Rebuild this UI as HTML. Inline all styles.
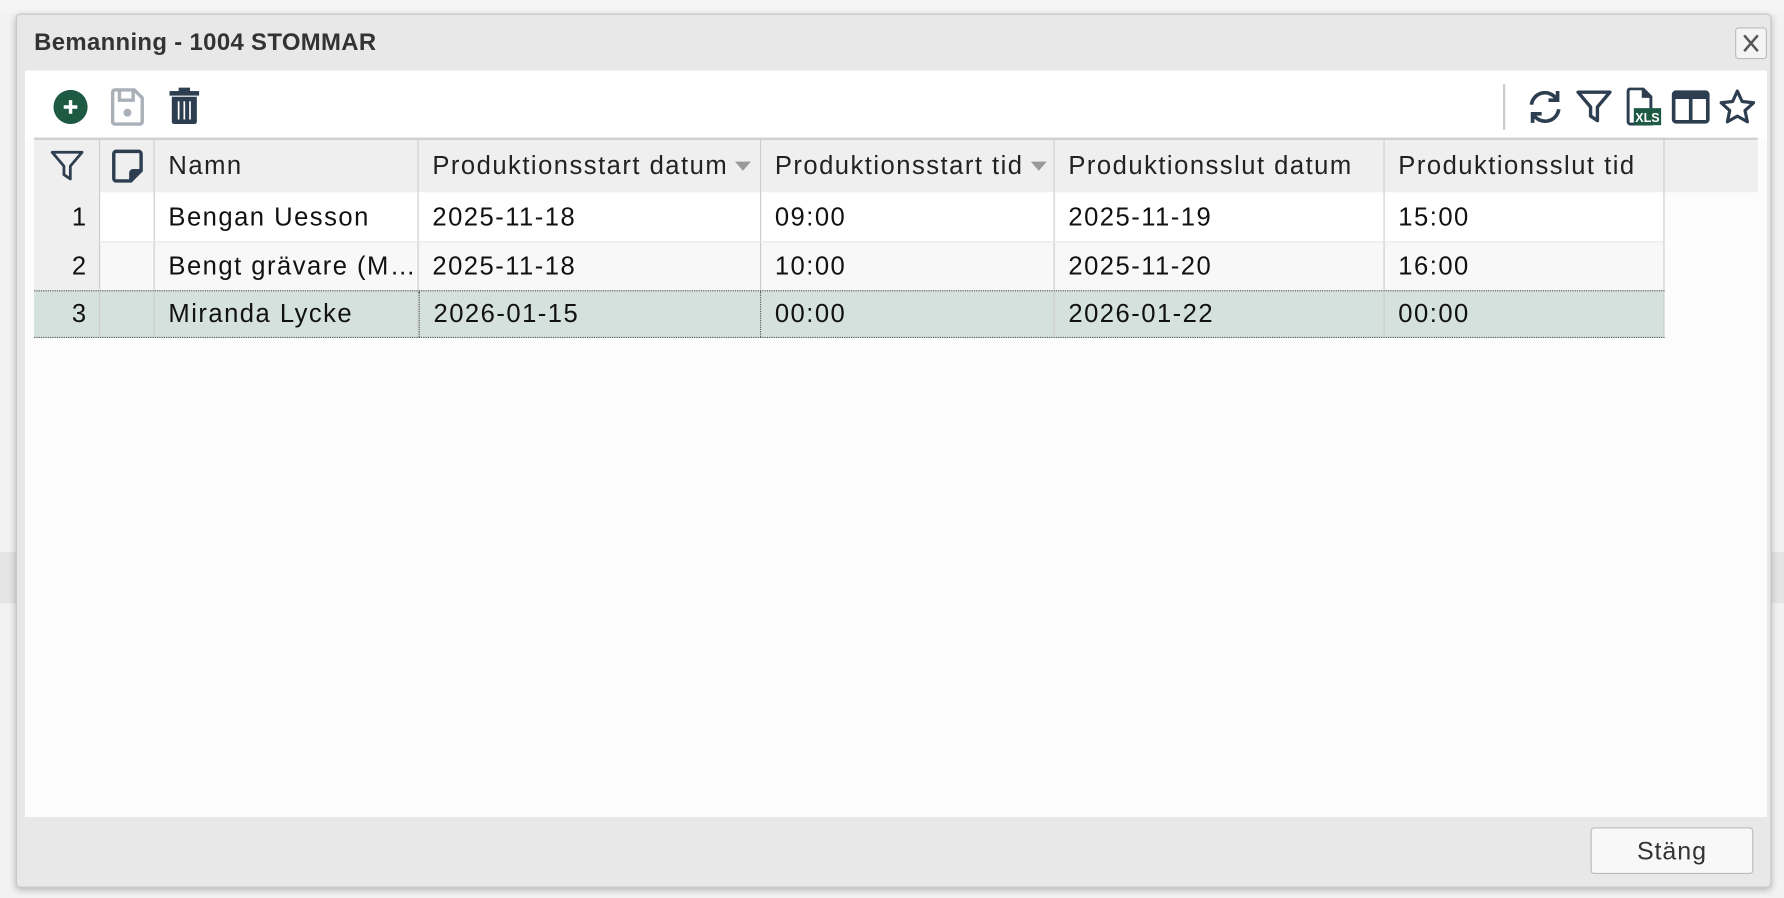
<!DOCTYPE html>
<html><head><meta charset="utf-8"><style>
*{box-sizing:border-box;margin:0;padding:0}
html,body{width:1784px;height:898px;overflow:hidden;background:#f2f2f2;font-family:"Liberation Sans",sans-serif}
#w{position:absolute;left:0;top:0;width:1568px;height:789px;transform:scale(1.13776,1.1381);transform-origin:0 0}
.bgl{position:absolute;background:#ddd}
#dlg{position:absolute;left:14px;top:12px;width:1543px;height:768px;background:#e8e8e8;border:1px solid #c8c8c8;border-radius:4px;box-shadow:0 2px 6px rgba(0,0,0,.25)}
#title{position:absolute;left:15px;top:13px;font-size:21px;color:#333;font-weight:bold;letter-spacing:.3px}
#close{position:absolute;left:1510px;top:11px;width:28px;height:28px;border:1px solid #bbb;border-radius:3px;background:#f4f4f4}
#content{position:absolute;left:7px;top:49px;width:1531px;height:656px;background:#fcfcfc}
#tb{position:absolute;left:0;top:0;width:1531px;height:60px;background:#fff}
.ic{position:absolute}
#grid{position:absolute;left:8px;top:59px}
.row{position:absolute;left:0;height:44px;width:1433px}
.c{position:absolute;top:0;height:100%;border-right:1px solid #ccc;font-size:22.5px;letter-spacing:1.3px;color:#111;padding-left:12px;display:flex;align-items:center;white-space:nowrap;overflow:hidden}
.hd .c{background:#efefef;color:#222}
#btn{position:absolute;left:1383px;top:714px;width:143px;height:41px;border:1px solid #bbb;border-radius:3px;background:#f8f8f8;font-size:22px;letter-spacing:.8px;color:#333;display:flex;align-items:center;justify-content:center}
.tri{display:inline-block;margin-left:6px;width:0;height:0;border-left:7px solid transparent;border-right:7px solid transparent;border-top:8px solid #999}
</style></head><body><div id="w">
<div class="bgl" style="left:0;top:0;width:1568px;height:12px;background:#f5f5f5"></div>
<div class="bgl" style="left:0;top:485px;width:14px;height:45px;background:#e4e4e4"></div>
<div class="bgl" style="left:1557px;top:485px;width:11px;height:45px;background:#e4e4e4"></div>
<div id="dlg">
 <div id="title">Bemanning - 1004 STOMMAR</div>
 <div id="close"><svg width="26" height="26" viewBox="0 0 26 26"><path d="M7 6L19 20M19 6L7 20" stroke="#555" stroke-width="2.2"/></svg></div>
 <div id="content">
  <div id="tb">
   <svg class="ic" style="left:24px;top:16px" width="32" height="32" viewBox="0 0 32 32"><circle cx="16" cy="16" r="15" fill="#1e5a43"/><path d="M16 10v12M10 16h12" stroke="#fff" stroke-width="3"/></svg>
   <svg class="ic" style="left:74px;top:15px" width="32" height="34" viewBox="0 0 32 34"><path d="M3 4a2 2 0 0 1 2-2h17l7 7v21a2 2 0 0 1-2 2H5a2 2 0 0 1-2-2z" fill="none" stroke="#aab0b8" stroke-width="3"/><path d="M9 3v8h12V3" fill="none" stroke="#aab0b8" stroke-width="3"/><circle cx="16" cy="22" r="3.5" fill="#aab0b8"/></svg>
   <svg class="ic" style="left:126px;top:14px" width="28" height="34" viewBox="0 0 28 34"><rect x="1" y="4" width="26" height="4" fill="#2d3e50"/><rect x="9" y="1" width="10" height="4" fill="#2d3e50"/><path d="M3 9h22v22a2 2 0 0 1-2 2H5a2 2 0 0 1-2-2z" fill="#2d3e50"/><path d="M9 13v16M14 13v16M19 13v16" stroke="#fff" stroke-width="1.5"/></svg>
   <div class="ic" style="left:1299px;top:12px;width:2px;height:40px;background:#ccc"></div>
   <svg class="ic" style="left:1319px;top:15px" width="34" height="34" viewBox="0 0 34 34" fill="none" stroke="#2d3e50" stroke-width="3.2"><path d="M5 15A12 12 0 0 1 27 10"/><path d="M28 3v8h-8"/><path d="M29 19A12 12 0 0 1 7 24"/><path d="M6 31v-8h8"/></svg>
   <svg class="ic" style="left:1362px;top:16px" width="34" height="32" viewBox="0 0 34 32" fill="none" stroke="#2d3e50" stroke-width="3" stroke-linejoin="round"><path d="M3 3h28L20 16v12l-6-4v-8z"/></svg>
   <svg class="ic" style="left:1407px;top:15px" width="32" height="34" viewBox="0 0 32 34"><path d="M2 3a2 2 0 0 1 2-2h11l7 7v24H4a2 2 0 0 1-2-2z" fill="none" stroke="#2d3e50" stroke-width="2.6"/><path d="M14 1v8h8" fill="#2d3e50"/><rect x="7" y="18" width="24" height="15" fill="#1e5a43"/><text x="19" y="30" font-size="11" font-weight="bold" fill="#fff" text-anchor="middle" font-family="Liberation Sans">XLS</text></svg>
   <svg class="ic" style="left:1447px;top:17px" width="34" height="30" viewBox="0 0 34 30"><rect x="2" y="2" width="30" height="26" rx="2" fill="none" stroke="#2d3e50" stroke-width="3.2"/><rect x="2" y="2" width="30" height="6" fill="#2d3e50"/><path d="M17 6v22" stroke="#2d3e50" stroke-width="3.2"/></svg>
   <svg class="ic" style="left:1488px;top:15px" width="34" height="34" viewBox="0 0 34 34"><path d="M17 3l4.2 9.2 10 1.1-7.5 6.8 2.1 9.9L17 25l-8.8 5 2.1-9.9-7.5-6.8 10-1.1z" fill="none" stroke="#2d3e50" stroke-width="2.8" stroke-linejoin="round"/></svg>
  </div>
  <div id="grid">
   <div style="position:absolute;left:0;top:0;width:1515px;height:48px;background:#efefef;border-top:2px solid #d0d0d0"></div>
   <div class="row hd" style="top:0;height:48px;border-top:2px solid #d0d0d0">
    <div class="c" style="left:0;width:58px;padding:0;justify-content:center"><svg width="32" height="30" viewBox="0 0 34 32" fill="none" stroke="#2d3e50" stroke-width="2.6" stroke-linejoin="round"><path d="M3 3h28L20 16v12l-6-4v-8z"/></svg></div>
    <div class="c" style="left:58px;width:48px;padding:0;justify-content:center"><svg width="32" height="32" viewBox="0 0 32 32" fill="none" stroke="#2d3e50" stroke-width="3"><path d="M4 5a2 2 0 0 1 2-2h20a2 2 0 0 1 2 2v15l-9 9H6a2 2 0 0 1-2-2z"/><path d="M28 20h-7a2 2 0 0 0-2 2v7" fill="#2d3e50"/></svg></div>
    <div class="c" style="left:106px;width:232px">Namn</div>
    <div class="c" style="left:338px;width:301px">Produktionsstart datum<span class="tri"></span></div>
    <div class="c" style="left:639px;width:258px">Produktionsstart tid<span class="tri"></span></div>
    <div class="c" style="left:897px;width:290px">Produktionsslut datum</div>
    <div class="c" style="left:1187px;width:246px">Produktionsslut tid</div>
   </div>
   <div class="row" style="top:48px;background:#fff;border-bottom:1px solid #e6e6e6">
    <div class="c" style="left:0;width:58px;background:#efefef;justify-content:flex-end;padding-right:10px">1</div>
    <div class="c" style="left:58px;width:48px"></div>
    <div class="c" style="left:106px;width:232px">Bengan Uesson</div>
    <div class="c" style="left:338px;width:301px">2025-11-18</div>
    <div class="c" style="left:639px;width:258px">09:00</div>
    <div class="c" style="left:897px;width:290px">2025-11-19</div>
    <div class="c" style="left:1187px;width:246px">15:00</div>
   </div>
   <div class="row" style="top:92px;height:42px;background:#f8f8f8">
    <div class="c" style="left:0;width:58px;background:#efefef;justify-content:flex-end;padding-right:10px">2</div>
    <div class="c" style="left:58px;width:48px"></div>
    <div class="c" style="left:106px;width:232px">Bengt grävare (M…</div>
    <div class="c" style="left:338px;width:301px">2025-11-18</div>
    <div class="c" style="left:639px;width:258px">10:00</div>
    <div class="c" style="left:897px;width:290px">2025-11-20</div>
    <div class="c" style="left:1187px;width:246px">16:00</div>
   </div>
   <div class="row" style="top:134px;height:42px;background:#d5e1dc;border-top:1px dotted #555;border-bottom:1px dotted #555">
    <div class="c" style="left:0;width:58px;justify-content:flex-end;padding-right:10px">3</div>
    <div class="c" style="left:58px;width:48px"></div>
    <div class="c" style="left:106px;width:232px">Miranda Lycke</div>
    <div class="c" style="left:338px;width:301px;border-left:1px dotted #555;border-right:1px dotted #555">2026-01-15</div>
    <div class="c" style="left:639px;width:258px">00:00</div>
    <div class="c" style="left:897px;width:290px">2026-01-22</div>
    <div class="c" style="left:1187px;width:246px">00:00</div>
   </div>
  </div>
 </div>
 <div id="btn">Stäng</div>
</div>
</div></body></html>
